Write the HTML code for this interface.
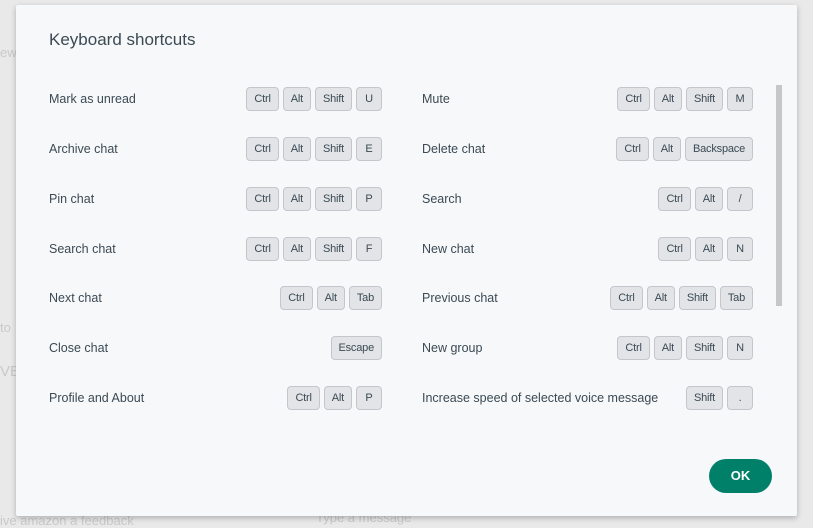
<!DOCTYPE html>
<html><head><style>
body{margin:0;width:813px;height:527px;background:#e9e9ea;font-family:"Liberation Sans",sans-serif;overflow:hidden;position:relative}
.bgt{position:absolute;color:#c9c9c9;font-size:13px}
.dlg{position:absolute;left:16px;top:5px;width:781px;height:511px;background:#f7f8fa;box-shadow:0 2px 6px rgba(0,0,0,.25);border-radius:2px}
h1{position:absolute;left:33px;top:25px;margin:0;font-weight:normal;font-size:17px;color:#3b4a54}
.row{position:absolute;height:24px;display:flex;align-items:center;justify-content:space-between;font-size:12.5px;color:#3b4a54}
.keys{display:flex;gap:4px}
.k{height:22px;min-width:10px;padding:0 7px;border:1px solid #c3c7cb;background:#e2e4e7;border-radius:4px;font-size:11px;line-height:22px;color:#3b4a54;text-align:center;letter-spacing:-0.2px}
.sb{position:absolute;left:760px;top:80px;width:6px;height:221px;background:#c6c7c9}
.ok{position:absolute;left:693px;top:454px;width:63px;height:34px;border-radius:17px;background:#008069;color:#fff;font-weight:bold;font-size:13px;text-align:center;line-height:34px}
</style></head><body>
<div class="bgt" style="left:0;top:45px">ew</div>
<div class="bgt" style="left:0;top:320px">to</div>
<div class="bgt" style="left:0;top:363px;font-size:15px">VE</div>
<div class="bgt" style="left:0;top:513px">ive amazon a feedback</div>
<div class="bgt" style="left:316px;top:510px">Type a message</div>
<div class="dlg">
<h1>Keyboard shortcuts</h1>
<div class="row" style="left:33px;top:82px;width:333px"><span>Mark as unread</span><div class="keys"><span class="k">Ctrl</span><span class="k">Alt</span><span class="k">Shift</span><span class="k">U</span></div></div>
<div class="row" style="left:33px;top:132px;width:333px"><span>Archive chat</span><div class="keys"><span class="k">Ctrl</span><span class="k">Alt</span><span class="k">Shift</span><span class="k">E</span></div></div>
<div class="row" style="left:33px;top:182px;width:333px"><span>Pin chat</span><div class="keys"><span class="k">Ctrl</span><span class="k">Alt</span><span class="k">Shift</span><span class="k">P</span></div></div>
<div class="row" style="left:33px;top:232px;width:333px"><span>Search chat</span><div class="keys"><span class="k">Ctrl</span><span class="k">Alt</span><span class="k">Shift</span><span class="k">F</span></div></div>
<div class="row" style="left:33px;top:281px;width:333px"><span>Next chat</span><div class="keys"><span class="k">Ctrl</span><span class="k">Alt</span><span class="k">Tab</span></div></div>
<div class="row" style="left:33px;top:331px;width:333px"><span>Close chat</span><div class="keys"><span class="k">Escape</span></div></div>
<div class="row" style="left:33px;top:381px;width:333px"><span>Profile and About</span><div class="keys"><span class="k">Ctrl</span><span class="k">Alt</span><span class="k">P</span></div></div>

<div class="row" style="left:406px;top:82px;width:331px"><span>Mute</span><div class="keys"><span class="k">Ctrl</span><span class="k">Alt</span><span class="k">Shift</span><span class="k">M</span></div></div>
<div class="row" style="left:406px;top:132px;width:331px"><span>Delete chat</span><div class="keys"><span class="k">Ctrl</span><span class="k">Alt</span><span class="k">Backspace</span></div></div>
<div class="row" style="left:406px;top:182px;width:331px"><span>Search</span><div class="keys"><span class="k">Ctrl</span><span class="k">Alt</span><span class="k">/</span></div></div>
<div class="row" style="left:406px;top:232px;width:331px"><span>New chat</span><div class="keys"><span class="k">Ctrl</span><span class="k">Alt</span><span class="k">N</span></div></div>
<div class="row" style="left:406px;top:281px;width:331px"><span>Previous chat</span><div class="keys"><span class="k">Ctrl</span><span class="k">Alt</span><span class="k">Shift</span><span class="k">Tab</span></div></div>
<div class="row" style="left:406px;top:331px;width:331px"><span>New group</span><div class="keys"><span class="k">Ctrl</span><span class="k">Alt</span><span class="k">Shift</span><span class="k">N</span></div></div>
<div class="row" style="left:406px;top:381px;width:331px"><span>Increase speed of selected voice message</span><div class="keys"><span class="k">Shift</span><span class="k">.</span></div></div>
<div class="sb"></div>
<div class="ok">OK</div>
</div>
</body></html>
